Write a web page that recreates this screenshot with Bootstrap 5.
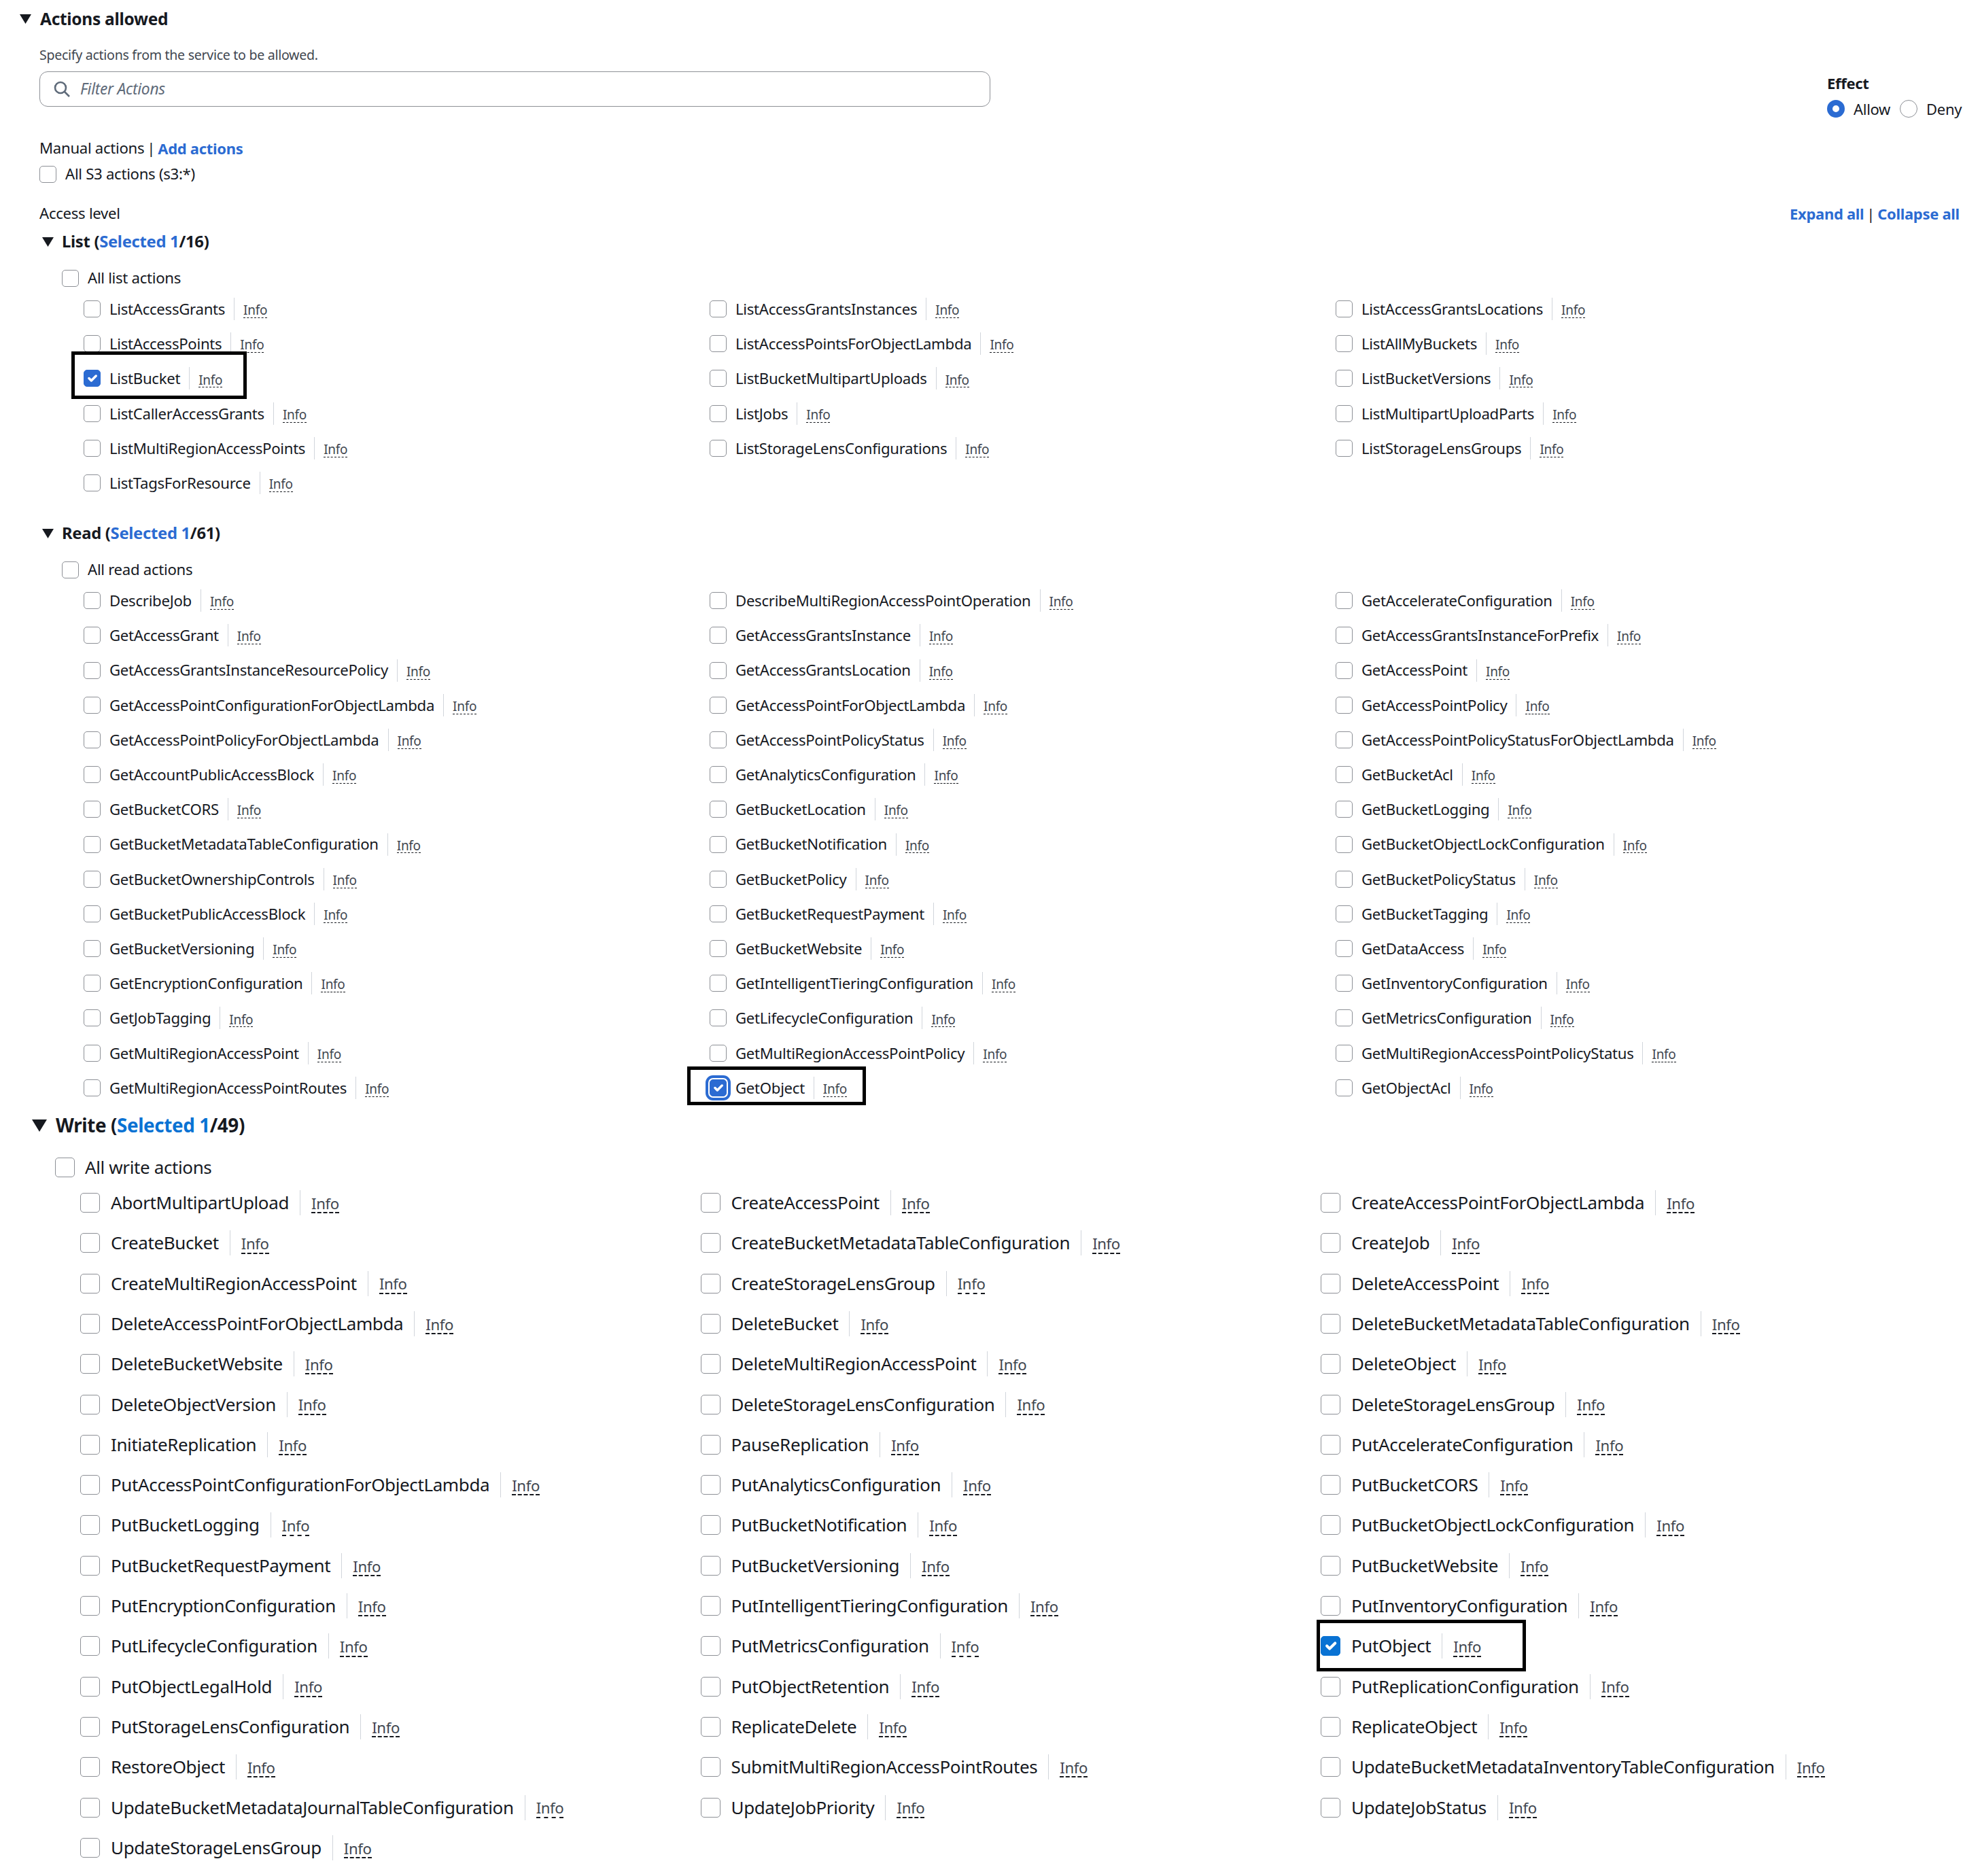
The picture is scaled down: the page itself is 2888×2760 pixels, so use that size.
<!DOCTYPE html>
<html lang="en">
<head>
<meta charset="UTF-8">
<title>Actions allowed</title>
<link href="https://cdn.jsdelivr.net/npm/bootstrap@5.3.0/dist/css/bootstrap.min.css" rel="stylesheet">
<style>
html, body { margin: 0; background: #fff; overflow-x: hidden; }
body { font-family: "Noto Sans", "Liberation Sans", sans-serif; color: #16191f; height: 2760px; width: 2888px; overflow: hidden; letter-spacing: -0.3px; }
a { text-decoration: none; color: #2b6bd2; font-weight: 700; }
.arrow { fill: #16191f; flex: none; }

.top-head { height: 56px; padding-left: 29px; gap: 13px; font-size: 24.5px; font-weight: 700; }
.desc-line { height: 49px; padding-left: 58px; font-size: 19.6px; color: #414750; padding-top: 10px; }
.top-wrap { padding-left: 58px; }
.filter-box { width: 1399px; height: 52px; border: 1px solid #8d9096; border-radius: 12px; padding-left: 20px; gap: 15px; }
.filter-text { font-size: 22.8px; font-style: italic; color: #5f6b7a; }
.effect-panel { width: 200px; margin-left: 1231px; margin-top: 1px; font-size: 22px; }
.effect-title { font-weight: 700; font-size: 22px; line-height: 32px; }
.effect-radios { height: 44px; }
.effect-radios .form-check-input { width: 26px; height: 26px; margin: 0; border: 1px solid #8d9096; background: #fff; flex: none; }
.effect-radios .form-check-input:checked { border: 8px solid #2b6bd2; background: #fff; }
.effect-radios label { margin: 0 14px 0 13px; white-space: nowrap; }

.plain-line { font-size: 22.2px; padding-left: 58px; }
.line-manual { height: 38px; margin-top: 17px; }
.line-manual a { font-size: 22px; }
.pipe-mark { margin: 0 4px; }
.line-all { height: 38px; gap: 13px; }
.line-access { height: 40px; margin-top: 19px; }
.expand-links { font-size: 22px; white-space: nowrap; width: 255px; flex: none; }

.small-group { --cb: 25px; --gap: 13px; --fs: 22.2px; --info: 19px; --sep: 33px; --row: 51.2px; --col: 921px; --left: 123px; --blue: #2b6bd2; }
.big-group { --cb: 29px; --gap: 16px; --fs: 26px; --info: 22.2px; --sep: 37px; --row: 59.31px; --col: 912.5px; --left: 118px; --blue: #0972d3; letter-spacing: -0.38px; }

.group-head { font-weight: 700; font-size: 23.8px; height: 44px; }
.group-head span { color: var(--blue); }
.small-group .group-head { padding-left: 62px; gap: 12px; }
.group-list .group-head { margin-bottom: 11px; }
.group-read { margin-top: 27px; }
.group-read .group-head { margin-bottom: 11px; }
.big-group .group-head { padding-left: 47px; gap: 13px; font-size: 27.8px; height: 60px; margin-bottom: 10px; }
.all-line { font-size: var(--fs); gap: var(--gap); height: 40px; }
.small-group .all-line { padding-left: 91px; }
.big-group .all-line { padding-left: 81px; height: 44px; gap: 15px; }

.act-grid { display: grid; grid-template-columns: repeat(3, var(--col)); grid-auto-rows: var(--row); padding-left: var(--left); }
.act-item { position: relative; font-size: var(--fs); white-space: nowrap; }
.form-check-input.act-check { width: var(--cb); height: var(--cb); margin: 0 var(--gap) 0 0; flex: none; border: 1px solid #8d9096; border-radius: 5px; }
.form-check-input.act-check:checked { background-color: var(--blue); border-color: var(--blue); }
.form-check-input.ring-check { box-shadow: 0 0 0 2px #fff, 0 0 0 6px var(--blue); }
.act-sep { width: 1px; height: var(--sep); background: #d1d5db; margin: 0 var(--gap); flex: none; }
.act-info { font-size: var(--info); color: #414750; line-height: 1.1; border-bottom: 1px dashed #16191f; margin-top: 5px; }
.big-group .act-info { border-bottom-width: 2px; }
.mark-box { position: absolute; border: 5px solid #000; pointer-events: none; }
.box-list { left: -18px; top: -14px; width: 258px; height: 70px; }
.box-get { left: -33px; top: -6px; width: 263px; height: 57px; }
.box-put { left: -6px; top: -9px; width: 308px; height: 76px; }
</style>
</head>
<body>

<div class="top-head d-flex align-items-center">
  <svg class="arrow" width="17" height="14" viewBox="0 0 17 14"><polygon points="0,0 17,0 8.5,14"/></svg>
  <span>Actions allowed</span>
</div>
<div class="desc-line">Specify actions from the service to be allowed.</div>
<div class="top-wrap d-flex">
  <div class="filter-box d-flex align-items-center">
    <svg width="24" height="24" viewBox="0 0 24 24" fill="none" stroke="#5f6b7a" stroke-width="2.6"><circle cx="10" cy="10" r="8"/><line x1="16" y1="16" x2="23" y2="23"/></svg>
    <span class="filter-text">Filter Actions</span>
  </div>
  <div class="effect-panel">
    <div class="effect-title">Effect</div>
    <div class="effect-radios d-flex align-items-center">
      <input class="form-check-input" type="radio" name="effect" id="allow" checked><label for="allow">Allow</label>
      <input class="form-check-input" type="radio" name="effect" id="deny"><label for="deny">Deny</label>
    </div>
  </div>
</div>

<div class="plain-line line-manual d-flex align-items-center"><span>Manual actions</span><span class="pipe-mark">|</span><a href="#">Add actions</a></div>
<div class="plain-line line-all d-flex align-items-center small-group">
  <input class="form-check-input act-check m-0" type="checkbox"><span>All S3 actions (s3:*)</span>
</div>
<div class="plain-line line-access d-flex align-items-center justify-content-between">
  <span>Access level</span>
  <span class="expand-links"><a href="#">Expand all</a><span class="pipe-mark">|</span><a href="#">Collapse all</a></span>
</div>

<div id="groups"></div>

<script>
const groups = [
  { name: 'List', total: 16, big: false, all: 'All list actions', selected: 'ListBucket', box: 'box-list', items: [
    'ListAccessGrants','ListAccessGrantsInstances','ListAccessGrantsLocations',
    'ListAccessPoints','ListAccessPointsForObjectLambda','ListAllMyBuckets',
    'ListBucket','ListBucketMultipartUploads','ListBucketVersions',
    'ListCallerAccessGrants','ListJobs','ListMultipartUploadParts',
    'ListMultiRegionAccessPoints','ListStorageLensConfigurations','ListStorageLensGroups',
    'ListTagsForResource'] },
  { name: 'Read', total: 61, big: false, all: 'All read actions', selected: 'GetObject', box: 'box-get', ring: true, items: [
    'DescribeJob','DescribeMultiRegionAccessPointOperation','GetAccelerateConfiguration',
    'GetAccessGrant','GetAccessGrantsInstance','GetAccessGrantsInstanceForPrefix',
    'GetAccessGrantsInstanceResourcePolicy','GetAccessGrantsLocation','GetAccessPoint',
    'GetAccessPointConfigurationForObjectLambda','GetAccessPointForObjectLambda','GetAccessPointPolicy',
    'GetAccessPointPolicyForObjectLambda','GetAccessPointPolicyStatus','GetAccessPointPolicyStatusForObjectLambda',
    'GetAccountPublicAccessBlock','GetAnalyticsConfiguration','GetBucketAcl',
    'GetBucketCORS','GetBucketLocation','GetBucketLogging',
    'GetBucketMetadataTableConfiguration','GetBucketNotification','GetBucketObjectLockConfiguration',
    'GetBucketOwnershipControls','GetBucketPolicy','GetBucketPolicyStatus',
    'GetBucketPublicAccessBlock','GetBucketRequestPayment','GetBucketTagging',
    'GetBucketVersioning','GetBucketWebsite','GetDataAccess',
    'GetEncryptionConfiguration','GetIntelligentTieringConfiguration','GetInventoryConfiguration',
    'GetJobTagging','GetLifecycleConfiguration','GetMetricsConfiguration',
    'GetMultiRegionAccessPoint','GetMultiRegionAccessPointPolicy','GetMultiRegionAccessPointPolicyStatus',
    'GetMultiRegionAccessPointRoutes','GetObject','GetObjectAcl'] },
  { name: 'Write', total: 49, big: true, all: 'All write actions', selected: 'PutObject', box: 'box-put', items: [
    'AbortMultipartUpload','CreateAccessPoint','CreateAccessPointForObjectLambda',
    'CreateBucket','CreateBucketMetadataTableConfiguration','CreateJob',
    'CreateMultiRegionAccessPoint','CreateStorageLensGroup','DeleteAccessPoint',
    'DeleteAccessPointForObjectLambda','DeleteBucket','DeleteBucketMetadataTableConfiguration',
    'DeleteBucketWebsite','DeleteMultiRegionAccessPoint','DeleteObject',
    'DeleteObjectVersion','DeleteStorageLensConfiguration','DeleteStorageLensGroup',
    'InitiateReplication','PauseReplication','PutAccelerateConfiguration',
    'PutAccessPointConfigurationForObjectLambda','PutAnalyticsConfiguration','PutBucketCORS',
    'PutBucketLogging','PutBucketNotification','PutBucketObjectLockConfiguration',
    'PutBucketRequestPayment','PutBucketVersioning','PutBucketWebsite',
    'PutEncryptionConfiguration','PutIntelligentTieringConfiguration','PutInventoryConfiguration',
    'PutLifecycleConfiguration','PutMetricsConfiguration','PutObject',
    'PutObjectLegalHold','PutObjectRetention','PutReplicationConfiguration',
    'PutStorageLensConfiguration','ReplicateDelete','ReplicateObject',
    'RestoreObject','SubmitMultiRegionAccessPointRoutes','UpdateBucketMetadataInventoryTableConfiguration',
    'UpdateBucketMetadataJournalTableConfiguration','UpdateJobPriority','UpdateJobStatus',
    'UpdateStorageLensGroup'] }
];

const html = groups.map(g => {
  const size = g.big ? [22, 18] : [17, 14];
  const rows = g.items.map(name => {
    const on = name === g.selected;
    return `<div class="act-item d-flex align-items-center">
      <input class="form-check-input act-check${on && g.ring ? ' ring-check' : ''}" type="checkbox"${on ? ' checked' : ''}>
      <span>${name}</span><span class="act-sep"></span><span class="act-info">Info</span>
      ${on ? `<div class="mark-box ${g.box}"></div>` : ''}
    </div>`;
  }).join('');
  return `<section class="${g.big ? 'big-group' : 'small-group'} group-${g.name.toLowerCase()}">
    <div class="group-head d-flex align-items-center">
      <svg class="arrow" width="${size[0]}" height="${size[1]}" viewBox="0 0 17 14" preserveAspectRatio="none"><polygon points="0,0 17,0 8.5,14"/></svg>
      <div>${g.name} (<span>Selected 1</span>/${g.total})</div>
    </div>
    <div class="all-line d-flex align-items-center">
      <input class="form-check-input act-check m-0" type="checkbox"><div>${g.all}</div>
    </div>
    <div class="act-grid">${rows}</div>
  </section>`;
}).join('');
document.getElementById('groups').innerHTML = html;
</script>
<script src="https://cdn.jsdelivr.net/npm/bootstrap@5.3.0/dist/js/bootstrap.bundle.min.js"></script>
</body>
</html>
